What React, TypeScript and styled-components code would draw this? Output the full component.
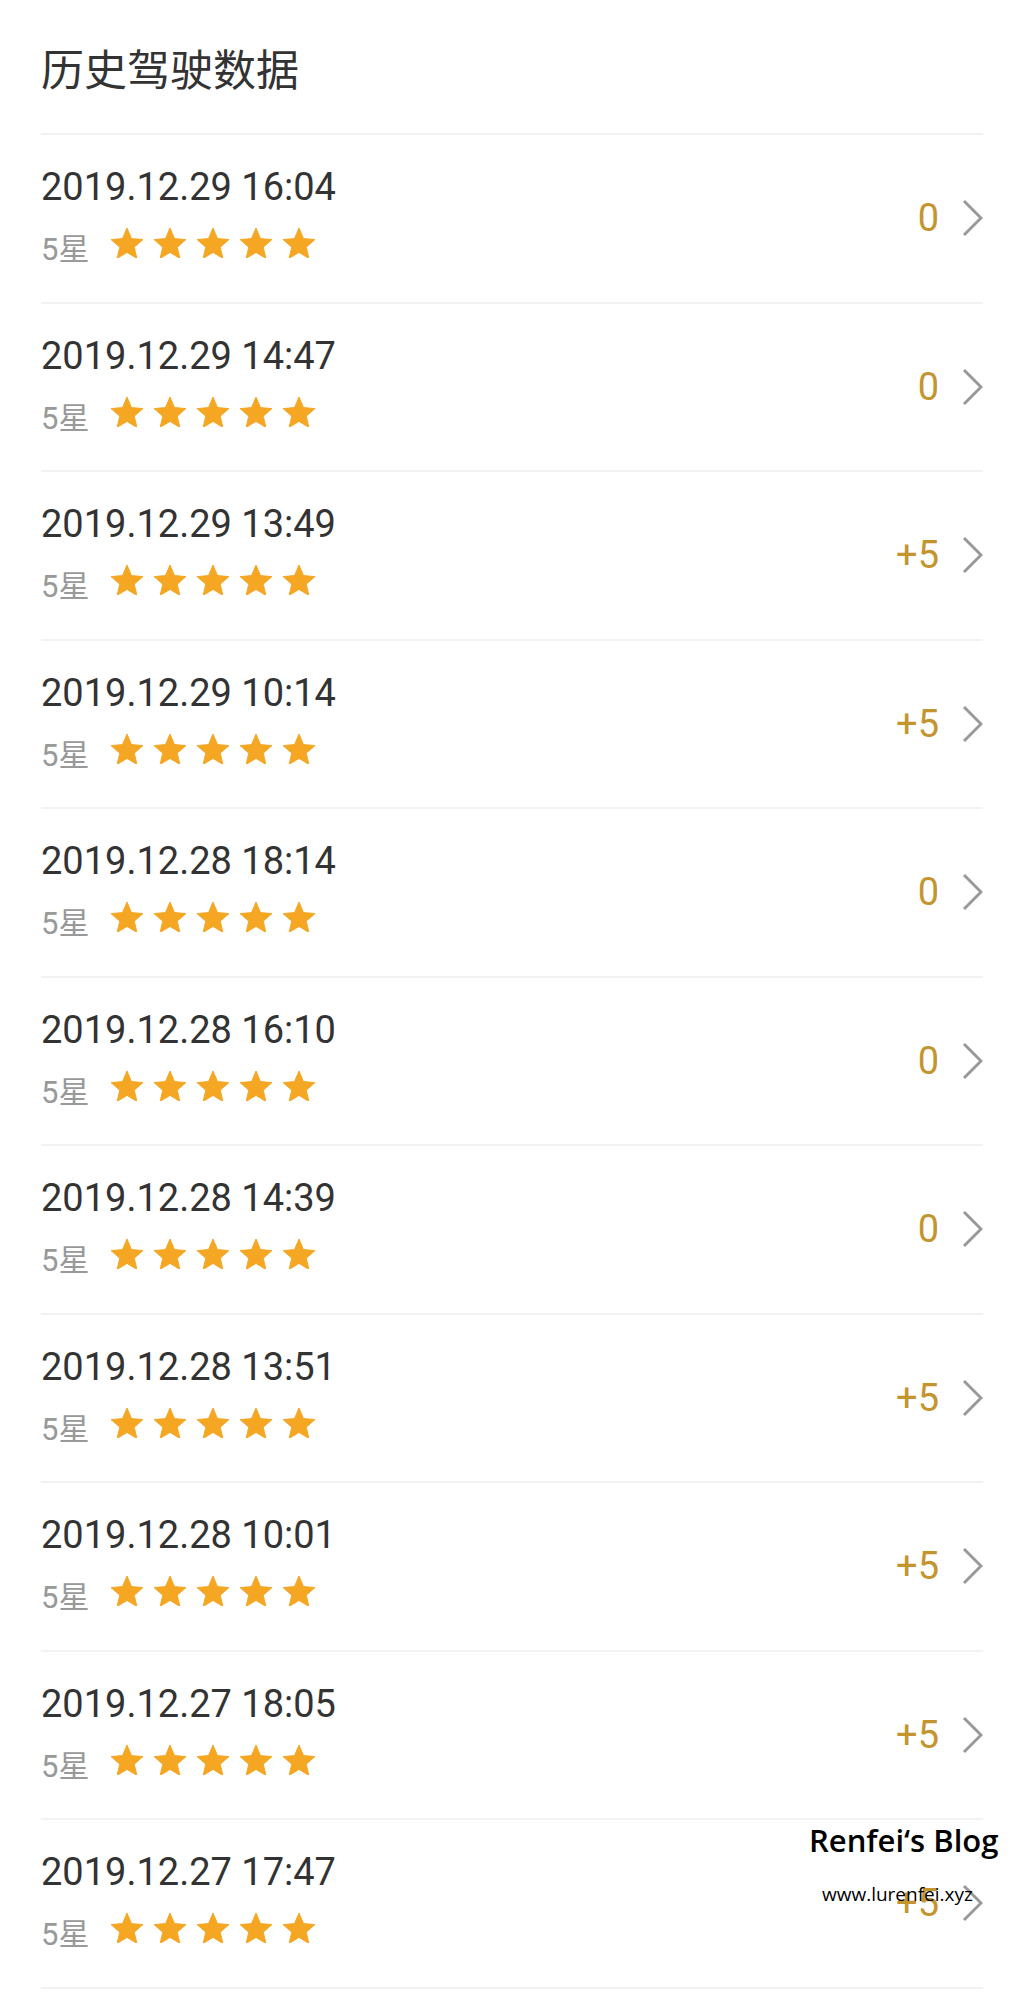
import React from "react";
import styled, { createGlobalStyle } from "styled-components";

const GlobalStyle = createGlobalStyle`
  html, body {
    margin: 0;
    padding: 0;
    background: #ffffff;
  }
  body {
    font-family: Roboto, "Noto Sans CJK SC", sans-serif;
    color: #333333;
  }
`;

const Page = styled.div`
  position: relative;
  padding: 0 41px;
  background: #ffffff;
`;

const Header = styled.header`
  padding: 50px 0 40px;
  border-bottom: 2px solid #f2f2f2;
`;

const Title = styled.h1`
  margin: 0;
  font-size: 43px;
  line-height: 43px;
  font-weight: 400;
  color: #333333;
`;

const List = styled.ul`
  margin: 0;
  padding: 0;
  list-style: none;
`;

const Row = styled.li`
  box-sizing: border-box;
  height: 168.5px;
  display: flex;
  align-items: center;
  border-bottom: 2px solid #f2f2f2;
`;

const Info = styled.div`
  flex: 1;
  display: flex;
  flex-direction: column;
  align-self: flex-start;
  padding-top: 30px;
`;

const DateText = styled.div`
  font-size: 38px;
  line-height: 44px;
  color: #333333;
`;

const RatingLine = styled.div`
  display: flex;
  align-items: flex-start;
  margin-top: 23px;
`;

const RatingLabel = styled.span`
  font-size: 31px;
  line-height: 36px;
  color: #999999;
`;

const Stars = styled.div`
  display: flex;
  gap: 11px;
  margin-left: 22px;
  margin-top: -4px;
`;

const Value = styled.span`
  font-size: 38px;
  line-height: 44px;
  color: #c4952e;
`;

const Chevron = styled.svg`
  margin-left: 23px;
  display: block;
`;

const Watermark = styled.div`
  position: absolute;
  top: 1820px;
  left: 809px;
  display: flex;
  flex-direction: column;
  font-family: "Open Sans", "Noto Sans", sans-serif;
  color: #000000;
  pointer-events: none;
`;

const WmTitle = styled.span`
  font-size: 31px;
  line-height: 40px;
  font-weight: 600;
  white-space: nowrap;
`;

const WmUrl = styled.span`
  font-size: 19px;
  line-height: 28px;
  margin-top: 20px;
  padding-left: 13px;
  white-space: nowrap;
`;

const Star: React.FC = () => (
  <svg width="32" height="30.4" viewBox="2 2 20 19">
    <path
      d="M12 17.27L18.18 21l-1.64-7.03L22 9.24l-7.19-.61L12 2 9.19 8.63 2 9.24l5.46 4.73L5.82 21z"
      fill="#f5a623"
      stroke="#f5a623"
      strokeWidth="0.6"
      strokeLinejoin="round"
    />
  </svg>
);

const rows: { date: string; value: string }[] = [
  { date: "2019.12.29 16:04", value: "0" },
  { date: "2019.12.29 14:47", value: "0" },
  { date: "2019.12.29 13:49", value: "+5" },
  { date: "2019.12.29 10:14", value: "+5" },
  { date: "2019.12.28 18:14", value: "0" },
  { date: "2019.12.28 16:10", value: "0" },
  { date: "2019.12.28 14:39", value: "0" },
  { date: "2019.12.28 13:51", value: "+5" },
  { date: "2019.12.28 10:01", value: "+5" },
  { date: "2019.12.27 18:05", value: "+5" },
  { date: "2019.12.27 17:47", value: "+5" },
];

export default function App() {
  return (
    <>
      <GlobalStyle />
      <Page>
        <Header>
          <Title>历史驾驶数据</Title>
        </Header>
        <List>
          {rows.map((r) => (
            <Row key={r.date}>
              <Info>
                <DateText>{r.date}</DateText>
                <RatingLine>
                  <RatingLabel>5星</RatingLabel>
                  <Stars>
                    {[0, 1, 2, 3, 4].map((i) => (
                      <Star key={i} />
                    ))}
                  </Stars>
                </RatingLine>
              </Info>
              <Value>{r.value}</Value>
              <Chevron width="21" height="38" viewBox="0 0 21 38">
                <polyline
                  points="2,2 19,19 2,36"
                  fill="none"
                  stroke="#999999"
                  strokeWidth="3"
                />
              </Chevron>
            </Row>
          ))}
        </List>
        <Watermark>
          <WmTitle>Renfei‘s Blog</WmTitle>
          <WmUrl>www.lurenfei.xyz</WmUrl>
        </Watermark>
      </Page>
    </>
  );
}
